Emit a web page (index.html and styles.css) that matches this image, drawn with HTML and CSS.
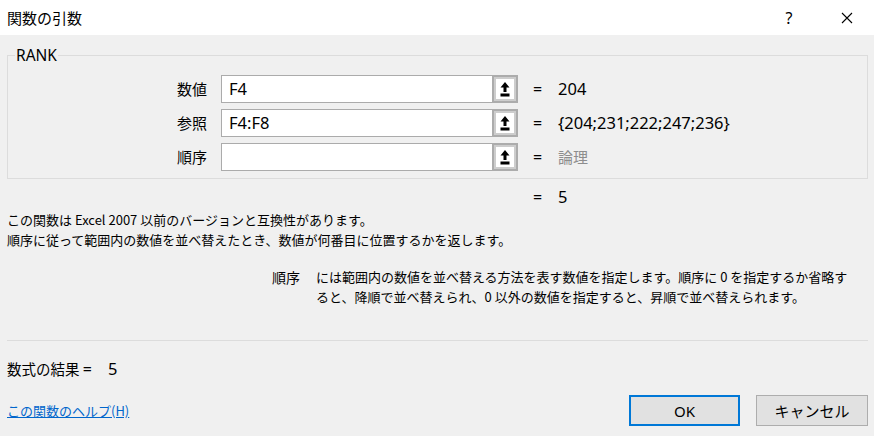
FILE: index.html
```html
<!DOCTYPE html>
<html lang="ja">
<head>
	<meta charset="UTF-8">
	<title>関数の引数</title>
	<link rel="stylesheet" href="styles.css">
</head>
<body>
	<div class="dialog">
		<div class="titlebar">
			<span class="title">関数の引数</span>
			<span class="tb-btn help">?</span>
			<span class="tb-btn close">
				<svg width="12" height="12" viewBox="0 0 12 12"><path d="M1 1L11 11M11 1L1 11" stroke="#000" stroke-width="1.1" fill="none"/></svg>
			</span>
		</div>

		<div class="main">
			<fieldset class="group">
				<legend>RANK</legend>
				<div class="args">
					<label class="arg-name">数値</label>
					<div class="arg-input"><span class="val">F4</span><span class="pick"><svg width="10" height="15" viewBox="0 0 10 15"><path d="M5 0L0.5 5.5H3.5V10H6.5V5.5H9.5Z" fill="#000"/><rect x="0.5" y="11.5" width="9" height="3" fill="#000"/></svg></span></div>
					<span class="eq">=</span>
					<span class="arg-val">204</span>

					<label class="arg-name">参照</label>
					<div class="arg-input"><span class="val">F4:F8</span><span class="pick"><svg width="10" height="15" viewBox="0 0 10 15"><path d="M5 0L0.5 5.5H3.5V10H6.5V5.5H9.5Z" fill="#000"/><rect x="0.5" y="11.5" width="9" height="3" fill="#000"/></svg></span></div>
					<span class="eq">=</span>
					<span class="arg-val">{204;231;222;247;236}</span>

					<label class="arg-name">順序</label>
					<div class="arg-input"><span class="val"></span><span class="pick"><svg width="10" height="15" viewBox="0 0 10 15"><path d="M5 0L0.5 5.5H3.5V10H6.5V5.5H9.5Z" fill="#000"/><rect x="0.5" y="11.5" width="9" height="3" fill="#000"/></svg></span></div>
					<span class="eq">=</span>
					<span class="arg-val muted">論理</span>
				</div>
			</fieldset>

			<div class="result"><span class="eq">=</span><span class="arg-val">5</span></div>

			<p class="desc">この関数は Excel 2007 以前のバージョンと互換性があります。<br>順序に従って範囲内の数値を並べ替えたとき、数値が何番目に位置するかを返します。</p>

			<div class="arg-help">
				<span class="arg-help-name">順序</span>
				<p class="arg-help-text">には範囲内の数値を並べ替える方法を表す数値を指定します。順序に 0 を指定するか省略す<br>ると、降順で並べ替えられ、0 以外の数値を指定すると、昇順で並べ替えられます。</p>
			</div>

			<hr class="sep">

			<div class="formula">数式の結果 <span class="formula-eq">=</span><span class="formula-val">5</span></div>

			<div class="footer">
				<a class="help-link" href="#">この関数のヘルプ(H)</a>
				<div class="buttons">
					<button class="btn btn-ok">OK</button>
					<button class="btn">キャンセル</button>
				</div>
			</div>
		</div>
	</div>
</body>
</html>
```

FILE: styles.css
```css
html, body{margin: 0; padding: 0;}
body{background: #f0f0f0; font-family: "Noto Sans", "Noto Sans CJK JP", sans-serif; color: #000; font-size: 16px;}
p{margin: 0;}
.dialog{width: 874px; height: 436px; overflow: hidden;}

.titlebar{height: 35px; background: #fff; display: flex; align-items: center;}
.title{flex: 1; padding-left: 7px; font-size: 15px; font-family: "Noto Sans CJK JP", sans-serif;}
.tb-btn{width: 46px; height: 35px; display: flex; align-items: center; justify-content: center;}
.help{font-size: 16px; margin-right: 12px;}
.close{margin-right: 4px;}

.main{padding: 0 6px 0 7px;}

.group{margin: 10px 0 0; padding: 10px 0 7px; border: 1px solid #dcdcdc; min-width: 0;}
.group legend{padding: 0 1px; margin-left: 7px; line-height: 20px; font-size: 15.5px;}

.args{display: grid; grid-template-columns: 213px 297px 40px auto; row-gap: 6px; align-items: center;}
.arg-name{text-align: right; padding-right: 14px; font-family: "Noto Sans CJK JP", sans-serif; font-size: 15px; line-height: 20px;}
.arg-input{height: 28px; box-sizing: border-box; display: flex; border: 1px solid #ababab; background: #fff;}
.arg-input .val{flex: 1; line-height: 26px; padding-left: 7px; font-size: 16.5px;}
.pick{width: 26px; height: 28px; margin: -1px -1px -1px 0; box-sizing: border-box; border: 2px solid #acacac; box-shadow: inset 0 0 0 2px #cdcdcd; background: #fff; display: flex; align-items: center; justify-content: center;}
.eq{padding-left: 15px; line-height: 20px;}
.arg-val{line-height: 20px; font-size: 16.5px;}
.muted{color: #8d8d8d; font-family: "Noto Sans CJK JP", sans-serif; font-size: 15px;}

.result{margin-top: 8px; padding-left: 511px; display: grid; grid-template-columns: 40px auto; line-height: 20px;}

.desc{margin-top: 3px; font-size: 13px; line-height: 20px; font-family: "Noto Sans CJK JP", sans-serif;}

.arg-help{margin-top: 17px; display: flex; font-size: 13px; line-height: 20px; font-family: "Noto Sans CJK JP", sans-serif;}
.arg-help-name{padding-left: 265px; width: 44px; flex: none; font-size: 14px;}
.arg-help-text{flex: 1;}

.sep{margin: 33px 0 0; border: none; border-top: 1px solid #dcdcdc; height: 0;}

.formula{margin-top: 18px; line-height: 20px; font-family: "Noto Sans CJK JP", sans-serif; font-size: 14.5px;}
.formula-eq{font-family: "Noto Sans", sans-serif; font-size: 16px;}
.formula-val{padding-left: 16px; font-family: "Noto Sans", sans-serif; font-size: 16.5px;}

.footer{margin-top: 16px; display: flex; align-items: center; justify-content: space-between;}
.help-link{color: #0066cc; font-size: 13px; font-family: "Noto Sans CJK JP", sans-serif; text-decoration: underline;}
.buttons{display: flex; gap: 16px;}
.btn{width: 112px; height: 31px; background: #e1e1e1; border: 1px solid #adadad; font-family: "Noto Sans", "Noto Sans CJK JP", sans-serif; font-size: 15px; color: #000; padding: 0;}
.btn-ok{width: 111px; border: 2px solid #0078d7;}
```
